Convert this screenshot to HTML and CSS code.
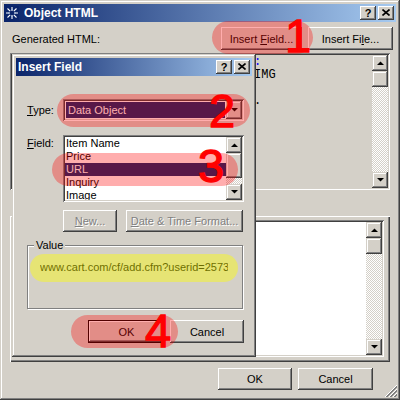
FILE: index.html
```html
<!DOCTYPE html>
<html>
<head>
<meta charset="utf-8">
<title>Object HTML</title>
<link rel="stylesheet" href="styles.css">
</head>
<body>
<div class="win">
  <div class="title">
    <svg class="appicon" viewBox="0 0 14 14"><rect width="14" height="14" fill="#0a246a"/><path d="M7 1v4M7 9v4M1 7h4M9 7h4M2.5 2.5l2.7 2.7M8.8 8.8l2.7 2.7M11.5 2.5L8.8 5.2M5.2 8.8l-2.7 2.7" stroke="#fff" stroke-width="1.1" fill="none"/><path d="M7 3v1M7 10v1M3 7h1M10 7h1" stroke="#a6caf0" stroke-width="1"/></svg>
    <span class="title-text">Object HTML</span>
    <div class="tbtns">
      <span class="tbtn">?</span>
      <span class="tbtn"><svg width="8" height="7" viewBox="0 0 8 7"><path d="M0.5 0.5L7.5 6.5M7.5 0.5L0.5 6.5" stroke="#000" stroke-width="1.6"/></svg></span>
    </div>
  </div>

  <div class="toprow">
    <span class="lbl">Generated HTML:</span>
    <div class="toprow-btns">
      <button class="btn w-field"><span>Insert <u>F</u>ield...</span></button>
      <button class="btn w-file"><span>Insert Fi<u>l</u>e...</span></button>
    </div>
  </div>

  <div class="code">
    <pre class="code-text"><span class="blue">:</span>
IMG

.</pre>
    <div class="vscroll">
      <span class="sb-btn"><svg width="7" height="4" viewBox="0 0 7 4"><path d="M0 4h7L3.5 0.5z"/></svg></span>
      <span class="sb-thumb"></span>
      <span class="sb-track"></span>
      <span class="sb-btn"><svg width="7" height="4" viewBox="0 0 7 4"><path d="M0 0h7L3.5 3.5z"/></svg></span>
    </div>
  </div>

  <div class="panel">
    <div class="plist">
      <div class="plist-body"></div>
      <div class="vscroll">
        <span class="sb-btn"><svg width="7" height="4" viewBox="0 0 7 4"><path d="M0 4h7L3.5 0.5z"/></svg></span>
        <span class="sb-thumb"></span>
        <span class="sb-track"></span>
        <span class="sb-btn"><svg width="7" height="4" viewBox="0 0 7 4"><path d="M0 0h7L3.5 3.5z"/></svg></span>
      </div>
    </div>
  </div>

  <div class="bottom">
    <button class="btn w-ok"><span>OK</span></button>
    <button class="btn w-cancel"><span>Cancel</span></button>
  </div>

  <svg class="grip" width="12" height="12" viewBox="0 0 12 12"><path stroke="#fff" d="M12 0L0 12M12 4L4 12M12 8L8 12"/><path stroke="#808080" d="M12 1L1 12M12 2L2 12M12 5L5 12M12 6L6 12M12 9L9 12M12 10L10 12"/></svg>

  <div class="dlg">
    <div class="title">
      <span class="title-text dlg-title">Insert Field</span>
      <div class="tbtns">
        <span class="tbtn">?</span>
        <span class="tbtn"><svg width="8" height="7" viewBox="0 0 8 7"><path d="M0.5 0.5L7.5 6.5M7.5 0.5L0.5 6.5" stroke="#000" stroke-width="1.6"/></svg></span>
      </div>
    </div>
    <div class="dbody">
      <div class="frow type-row">
        <span class="flbl"><u>T</u>ype:</span>
        <div class="combo">
          <span class="combo-val">Data Object</span>
          <span class="sb-btn combo-btn"><svg width="7" height="4" viewBox="0 0 7 4"><path d="M0 0h7L3.5 3.5z"/></svg></span>
        </div>
      </div>
      <div class="frow field-row">
        <span class="flbl flbl-top"><u>F</u>ield:</span>
        <div class="list">
          <div class="items">
            <div class="item">Item Name</div>
            <div class="item">Price</div>
            <div class="item sel">URL</div>
            <div class="item">Inquiry</div>
            <div class="item">Image</div>
          </div>
          <div class="vscroll">
            <span class="sb-btn"><svg width="7" height="4" viewBox="0 0 7 4"><path d="M0 4h7L3.5 0.5z"/></svg></span>
            <span class="sb-thumb list-thumb"></span>
            <span class="sb-track"></span>
            <span class="sb-btn"><svg width="7" height="4" viewBox="0 0 7 4"><path d="M0 0h7L3.5 3.5z"/></svg></span>
          </div>
        </div>
      </div>
      <div class="brow">
        <button class="btn dis w-new"><span><u>N</u>ew...</span></button>
        <button class="btn dis w-date"><span><u>D</u>ate &amp; Time Format...</span></button>
      </div>
      <div class="grp">
        <span class="grp-label">Value</span>
        <div class="value">www.cart.com/cf/add.cfm?userid=2573</div>
      </div>
      <div class="okrow">
        <button class="btn def w-dok"><span>OK</span></button>
        <button class="btn w-dcancel"><span>Cancel</span></button>
      </div>
    </div>
  </div>

  <span class="pill p1"></span>
  <span class="pill p2"></span>
  <span class="pill p3"></span>
  <span class="pill p4"></span>
  <span class="pill py"></span>
  <span class="num n1">1</span>
  <span class="num n2">2</span>
  <span class="num n3">3</span>
  <span class="num n4">4</span>
</div>
</body>
</html>
```

FILE: styles.css
```css
* { box-sizing: border-box; }

body {
  margin: 0;
  background: #d4d0c8;
  font-family: "Liberation Sans", Arial, sans-serif;
  font-size: 11px;
  color: #000;
}

.win {
  position: relative;
  width: 400px;
  height: 400px;
  padding: 4px;
  background: #d4d0c8;
  box-shadow: inset -1px -1px #404040, inset 1px 1px #d4d0c8, inset -2px -2px #808080, inset 2px 2px #fff;
  display: flex;
  flex-direction: column;
  overflow: hidden;
}

.title {
  flex: none;
  height: 18px;
  display: flex;
  align-items: center;
  background: linear-gradient(to right, #0a246a, #a6caf0);
  color: #fff;
  font-weight: bold;
  font-size: 12px;
}

.appicon { width: 14px; height: 14px; margin: 0 5px 0 1px; flex: none; }
.title-text { flex: 1; white-space: nowrap; }
.dlg-title { padding-left: 2px; }

.tbtns { display: flex; gap: 2px; margin-right: 2px; }
.tbtn {
  width: 16px;
  height: 14px;
  background: #d4d0c8;
  box-shadow: inset -1px -1px #404040, inset 1px 1px #fff, inset -2px -2px #808080, inset 2px 2px #d4d0c8;
  display: flex;
  align-items: center;
  justify-content: center;
  color: #000;
  font-size: 11px;
  font-weight: bold;
  line-height: 14px;
  padding-bottom: 1px;
}

button {
  font: inherit;
  color: #000;
  border: 0;
  padding: 0;
  margin: 0;
  background: #d4d0c8;
}

.btn {
  display: flex;
  align-items: center;
  justify-content: center;
  height: 100%;
  flex: none;
  white-space: nowrap;
  box-shadow: inset -1px -1px #404040, inset 1px 1px #fff, inset -2px -2px #808080, inset 2px 2px #d4d0c8;
}
.btn.def {
  box-shadow: inset 0 0 0 1px #000, inset -2px -2px #404040, inset 2px 2px #fff, inset -3px -3px #808080;
}
.btn.dis { color: #808080; text-shadow: 1px 1px #fff; }

.toprow {
  flex: none;
  margin-top: 5px;
  height: 23px;
  padding: 0 3px 0 8px;
  display: flex;
  align-items: center;
  justify-content: space-between;
}
.toprow-btns { display: flex; gap: 6px; height: 23px; }
.w-field { width: 81px; }
.w-file { width: 85px; }

.code {
  flex: none;
  margin: 3px 6px 0;
  height: 137px;
  padding: 2px;
  display: flex;
  background: #d4d0c8;
  box-shadow: inset 1px 1px #808080, inset -1px -1px #fff, inset 2px 2px #404040, inset -2px -2px #d4d0c8;
}
.code-text {
  flex: 1;
  margin: 0;
  padding: 1px 0 0 242px;
  font: 12px/13px "Liberation Mono", "Courier New", monospace;
  white-space: pre;
  overflow: hidden;
}
.blue { color: #0000ff; }

.vscroll { width: 16px; flex: none; display: flex; flex-direction: column; }
.sb-btn, .sb-thumb {
  flex: none;
  height: 16px;
  background: #d4d0c8;
  box-shadow: inset -1px -1px #404040, inset 1px 1px #d4d0c8, inset -2px -2px #808080, inset 2px 2px #fff;
}
.sb-btn { display: flex; align-items: center; justify-content: center; }
.sb-btn svg { fill: #000; }
.sb-track {
  flex: 1;
  background: repeating-conic-gradient(#fff 0 25%, #d4d0c8 0 50%) 0 0 / 2px 2px;
}

.panel {
  flex: none;
  margin: 26px 6px 0;
  height: 146px;
  padding: 4px 6px 5px 100px;
  box-shadow: inset 1px 1px #fff, inset -1px -1px #404040, inset -2px -2px #808080;
}
.plist {
  height: 100%;
  display: flex;
  padding: 2px;
  background: #fff;
  box-shadow: inset 1px 1px #808080, inset -1px -1px #fff, inset 2px 2px #404040, inset -2px -2px #d4d0c8;
}
.plist-body { flex: 1; }

.bottom {
  flex: none;
  margin-top: 6px;
  height: 22px;
  display: flex;
  justify-content: flex-end;
  gap: 6px;
  padding-right: 23px;
}
.w-ok { width: 74px; }
.w-cancel { width: 75px; }

.grip { position: absolute; right: 3px; bottom: 3px; }

/* Insert Field dialog */
.dlg {
  position: absolute;
  left: 12px;
  top: 54px;
  width: 244px;
  height: 303px;
  padding: 4px;
  background: #d4d0c8;
  box-shadow: inset -1px -1px #404040, inset 1px 1px #d4d0c8, inset -2px -2px #808080, inset 2px 2px #fff;
  display: flex;
  flex-direction: column;
}
.dbody {
  padding: 0 8px 0 11px;
  display: flex;
  flex-direction: column;
}
.frow { display: flex; }
.flbl { width: 36px; flex: none; }
.type-row { margin-top: 23px; height: 22px; align-items: center; }
.field-row { margin-top: 14px; height: 67px; }
.flbl-top { padding-top: 2px; }

.combo {
  flex: 1;
  height: 22px;
  padding: 2px;
  display: flex;
  background: #fff;
  box-shadow: inset 1px 1px #808080, inset -1px -1px #fff, inset 2px 2px #404040, inset -2px -2px #d4d0c8;
}
.combo-val {
  flex: 1;
  margin: 1px;
  padding-left: 2px;
  background: #0a246a;
  color: #fff;
  line-height: 16px;
}
.combo-btn { height: 18px; width: 16px; }

.list {
  flex: 1;
  display: flex;
  padding: 2px;
  background: #fff;
  overflow: hidden;
  box-shadow: inset 1px 1px #808080, inset -1px -1px #fff, inset 2px 2px #404040, inset -2px -2px #d4d0c8;
}
.items { flex: 1; overflow: hidden; }
.item { height: 13px; line-height: 13px; padding-left: 1px; white-space: nowrap; }
.item.sel { background: #0a246a; color: #fff; }
.list-thumb { height: 25px; }

.brow {
  margin: 8px 0 0 36px;
  height: 22px;
  display: flex;
  gap: 9px;
}
.w-new { width: 54px; }
.w-date { width: 117px; }

.grp {
  margin: 13px 1px 0 0;
  height: 64px;
  border: 1px solid #808080;
  box-shadow: inset 1px 1px #fff, 1px 1px #fff;
}
.grp-label {
  display: block;
  width: fit-content;
  margin: -7px 0 0 6px;
  padding: 0 2px;
  line-height: 13px;
  background: #d4d0c8;
}
.value {
  margin: 9px 0 0 12px;
  width: 188px;
  line-height: 13px;
  white-space: nowrap;
  overflow: hidden;
}

.okrow {
  margin-top: 11px;
  height: 23px;
  display: flex;
  justify-content: flex-end;
  gap: 5px;
}
.w-dok { width: 77px; }
.w-dcancel { width: 74px; }

/* annotation overlays */
.pill {
  position: absolute;
  border-radius: 17px;
  background: rgba(255, 0, 0, 0.32);
}
.p1 { left: 212px; top: 21px; width: 101px; height: 33px; }
.p2 { left: 57px; top: 94px; width: 193px; height: 33px; }
.p3 { left: 52px; top: 153px; width: 186px; height: 33px; }
.p4 { left: 71px; top: 315px; width: 107px; height: 33px; }
.py { left: 30px; top: 254px; width: 208px; height: 28px; border-radius: 14px; background: rgba(255, 255, 0, 0.42); }

.num {
  position: absolute;
  color: #ff0000;
  -webkit-text-stroke: 1.3px #ff0000;
  font: 47px/47px "Liberation Sans", Arial, sans-serif;
}
.n1 { left: 285px; top: 12px; }
.n2 { left: 209px; top: 87px; }
.n3 { left: 198px; top: 142px; }
.n4 { left: 145px; top: 307px; }
```
